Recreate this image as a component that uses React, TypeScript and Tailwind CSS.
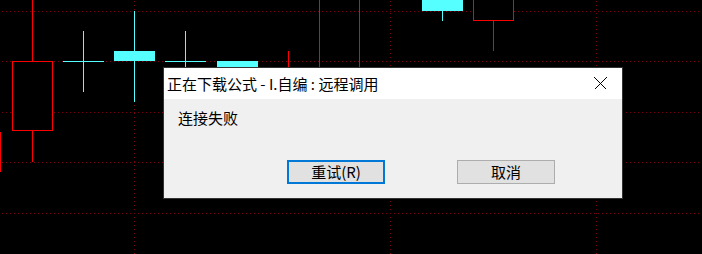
const RED = '#ff0000';
const CYAN = '#55ffff';
const GRID = '#780010';

function Chart() {
  const hLines = [11.5, 61.5, 112.5, 162.5, 213.5];
  const vLines = [134.5, 390.5, 596.5];

  return (
    <svg width={702} height={254} className="block" shapeRendering="crispEdges">
      {hLines.map((y) => (
        <line key={y} x1={2} x2={702} y1={y} y2={y} stroke={GRID} strokeDasharray="1 3" />
      ))}
      {vLines.map((x) => (
        <line key={x} x1={x} x2={x} y1={1} y2={254} stroke={GRID} strokeDasharray="1 3" />
      ))}

      {/* left red hollow candle */}
      <line x1={0.5} x2={0.5} y1={132} y2={172} stroke={RED} />
      <line x1={32.5} x2={32.5} y1={0} y2={61} stroke={RED} />
      <rect x={12.5} y={61.5} width={40} height={69} fill="#000" stroke={RED} />
      <line x1={32.5} x2={32.5} y1={131} y2={162} stroke={RED} />

      {/* cyan cross */}
      <line x1={63} x2={104} y1={61.5} y2={61.5} stroke={CYAN} />
      <line x1={83.5} x2={83.5} y1={31} y2={92} stroke={CYAN} />

      {/* cyan filled candle */}
      <line x1={134.5} x2={134.5} y1={11} y2={102} stroke={CYAN} />
      <rect x={114} y={51} width={41} height={10} fill={CYAN} />

      {/* cyan cross */}
      <line x1={165} x2={206} y1={61.5} y2={61.5} stroke={CYAN} />
      <line x1={185.5} x2={185.5} y1={31} y2={80} stroke={CYAN} />

      {/* cyan body behind dialog */}
      <rect x={217} y={61} width={41} height={20} fill={CYAN} />

      <line x1={288.5} x2={288.5} y1={51} y2={80} stroke={RED} />
      <line x1={319.5} x2={319.5} y1={0} y2={80} stroke={RED} />
      <line x1={359.5} x2={359.5} y1={0} y2={80} stroke={RED} />

      {/* top right candles */}
      <rect x={422} y={0} width={41} height={11} fill={CYAN} />
      <line x1={442.5} x2={442.5} y1={11} y2={21} stroke={CYAN} />
      <rect x={473.5} y={-1} width={40} height={21.5} fill="#000" stroke={RED} />
      <line x1={493.5} x2={493.5} y1={21} y2={51} stroke={RED} />
    </svg>
  );
}

export default function App() {
  return (
    <div className="relative w-[702px] h-[254px] overflow-hidden bg-black font-['Noto_Sans_CJK_SC','Noto_Sans',sans-serif]">
      <Chart />

      <div className="absolute left-[163px] top-[67px] w-[460px] h-[132px] border border-[#333333] flex flex-col">
        <div className="h-[31px] bg-white flex items-center justify-between pl-[3px] pr-[15px]">
          <span className="text-[15px] leading-5 text-black">正在下载公式 - I.自编 : 远程调用</span>
          <svg width={13} height={13} viewBox="0 0 13 13" shapeRendering="crispEdges">
            <path d="M0.5 0.5 L12.5 12.5 M12.5 0.5 L0.5 12.5" stroke="#000" strokeWidth={1} fill="none" />
          </svg>
        </div>
        <div className="flex-1 bg-[#f0f0f0] flex flex-col">
          <div className="pl-[14px] pt-[9px] text-[15px] leading-5 text-black">连接失败</div>
          <div className="mt-auto mb-[14px] flex justify-end gap-[72px] pr-[67px]">
            <button className="w-[98px] h-[24px] border-2 border-[#0078d7] bg-[#e1e1e1] text-[15px] leading-5 text-black">
              重试(R)
            </button>
            <button className="w-[98px] h-[24px] border border-[#adadad] bg-[#e1e1e1] text-[15px] leading-5 text-black">
              取消
            </button>
          </div>
        </div>
      </div>
    </div>
  );
}
